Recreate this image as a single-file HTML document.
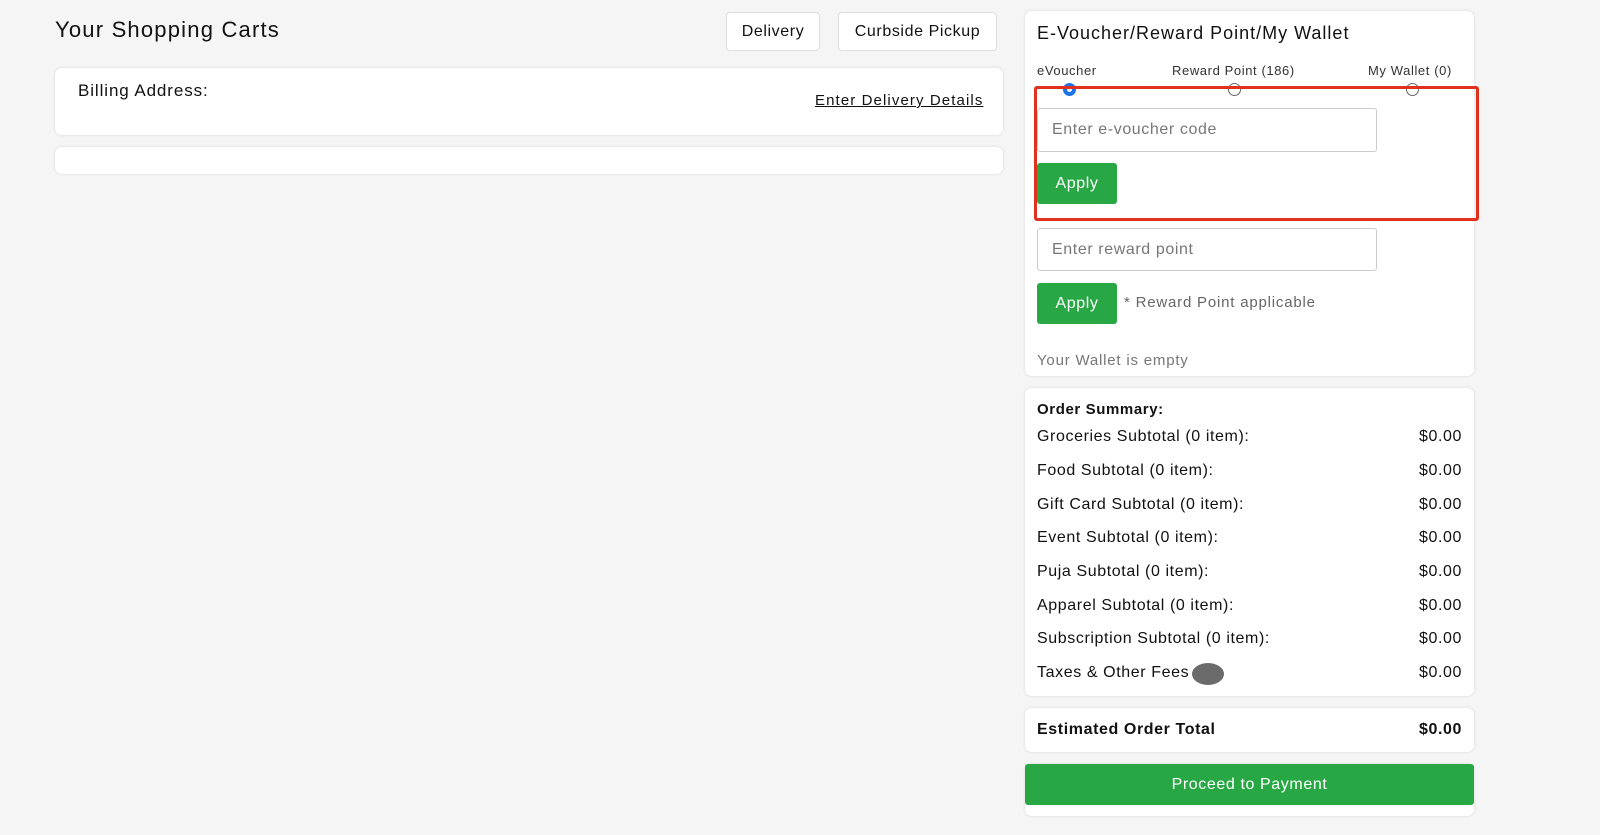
<!DOCTYPE html>
<html><head><style>
*{box-sizing:border-box;margin:0;padding:0}
body{width:1600px;height:835px;background:#f5f5f5;font-family:"Liberation Sans",sans-serif;color:#111;position:relative;overflow:hidden;letter-spacing:0.6px}
.a{position:absolute;white-space:nowrap}
.card{position:absolute;background:#fff;border-radius:7px;box-shadow:0 0 3px rgba(0,0,0,.12)}
.btn{position:absolute;background:#fff;border:1px solid #ddd;border-radius:4px;font-size:16px;display:flex;align-items:center;justify-content:center}
.inp{position:absolute;border:1px solid #ccc;border-radius:3px;background:#fff;font-size:16px;color:#777;padding-left:14px;display:flex;align-items:center}
.g{position:absolute;background:#28a745;color:#fff;border-radius:3px;font-size:16px;display:flex;align-items:center;justify-content:center}
.row{position:absolute;left:1037px;width:425px;font-size:16px;display:flex;justify-content:space-between}
.radio{position:absolute;width:13px;height:13px;border-radius:50%;border:1px solid #666;background:#fff}
</style></head><body>
<div class="a" style="left:55px;top:17px;font-size:22px;letter-spacing:1.2px">Your Shopping Carts</div>
<div class="btn" style="left:726px;top:12px;width:94px;height:39px">Delivery</div>
<div class="btn" style="left:838px;top:12px;width:159px;height:39px">Curbside Pickup</div>
<div class="card" style="left:55px;top:68px;width:948px;height:67px"></div>
<div class="a" style="left:78px;top:81px;font-size:17px;letter-spacing:0.9px">Billing Address:</div>
<div class="a" style="left:815px;top:92px;font-size:15px;text-decoration:underline;letter-spacing:1.1px">Enter Delivery Details</div>
<div class="card" style="left:55px;top:147px;width:948px;height:27px"></div>

<div class="card" style="left:1025px;top:11px;width:449px;height:365px"></div>
<div class="a" style="left:1037px;top:23px;font-size:18px;letter-spacing:1px">E-Voucher/Reward Point/My Wallet</div>
<div class="a" style="left:1037px;top:63px;font-size:13px;color:#333">eVoucher</div>
<div class="a" style="left:1172px;top:63px;font-size:13px;color:#333">Reward Point (186)</div>
<div class="a" style="left:1368px;top:63px;font-size:13px;color:#333">My Wallet (0)</div>
<div class="radio" style="left:1063px;top:83px;border:4px solid #1a73e8"></div>
<div class="radio" style="left:1228px;top:83px"></div>
<div class="radio" style="left:1406px;top:83px"></div>
<div class="a" style="left:1034px;top:86px;width:445px;height:135px;border:3px solid #e0301e;border-radius:3px"></div>
<div class="inp" style="left:1037px;top:108px;width:340px;height:44px">Enter e-voucher code</div>
<div class="g" style="left:1037px;top:163px;width:80px;height:41px">Apply</div>
<div class="inp" style="left:1037px;top:228px;width:340px;height:43px">Enter reward point</div>
<div class="g" style="left:1037px;top:283px;width:80px;height:41px">Apply</div>
<div class="a" style="left:1124px;top:294px;font-size:15px;color:#666;letter-spacing:0.8px">* Reward Point applicable</div>
<div class="a" style="left:1037px;top:352px;font-size:15px;color:#777;letter-spacing:0.8px">Your Wallet is empty</div>

<div class="card" style="left:1025px;top:388px;width:449px;height:308px"></div>
<div class="a" style="left:1037px;top:401px;font-size:15px;font-weight:bold">Order Summary:</div>
<div class="row" style="top:428px"><span>Groceries Subtotal (0 item):</span><span>$0.00</span></div>
<div class="row" style="top:462px"><span>Food Subtotal (0 item):</span><span>$0.00</span></div>
<div class="row" style="top:496px"><span>Gift Card Subtotal (0 item):</span><span>$0.00</span></div>
<div class="row" style="top:529px"><span>Event Subtotal (0 item):</span><span>$0.00</span></div>
<div class="row" style="top:563px"><span>Puja Subtotal (0 item):</span><span>$0.00</span></div>
<div class="row" style="top:597px"><span>Apparel Subtotal (0 item):</span><span>$0.00</span></div>
<div class="row" style="top:630px"><span>Subscription Subtotal (0 item):</span><span>$0.00</span></div>
<div class="row" style="top:664px"><span>Taxes &amp; Other Fees</span><span>$0.00</span></div>
<div class="a" style="left:1192px;top:663px;width:32px;height:22px;border-radius:50%;background:#6b6b6b"></div>

<div class="card" style="left:1025px;top:708px;width:449px;height:44px"></div>
<div class="row" style="top:721px;font-weight:bold"><span>Estimated Order Total</span><span>$0.00</span></div>
<div class="card" style="left:1025px;top:764px;width:449px;height:52px"></div>
<div class="g" style="left:1025px;top:764px;width:449px;height:41px;border-radius:3px">Proceed to Payment</div>
</body></html>
